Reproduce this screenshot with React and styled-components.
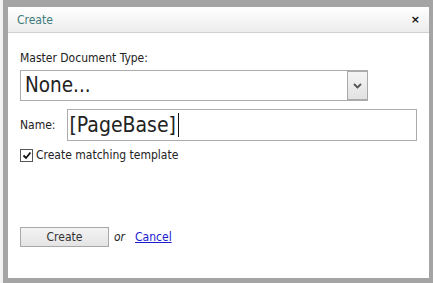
import React from "react";
import styled, { createGlobalStyle } from "styled-components";

const GlobalStyle = createGlobalStyle`
  html, body {
    margin: 0;
    padding: 0;
    background: #f2f2f2;
  }
  body {
    font-family: "DejaVu Sans Condensed", "DejaVu Sans", sans-serif;
    font-size: 12px;
    color: #222;
  }
`;

const Page = styled.div`
  padding-left: 3px;
  height: 283px;
  background: #f2f2f2;
`;

const Frame = styled.div`
  width: 421px;
  height: 271px;
  border-style: solid;
  border-color: #a4a4a4;
  border-width: 7px 4px 5px 5px;
  background: #fff;
  display: flex;
  flex-direction: column;
`;

const Header = styled.div`
  height: 25px;
  border-bottom: 1px solid #cfcfcf;
  background: linear-gradient(#ffffff, #ececec);
  display: flex;
  align-items: center;
  justify-content: space-between;
  padding: 0 9px;
`;

const Title = styled.span`
  color: #3c7b7c;
  font-size: 12px;
`;

const Close = styled.span`
  font-weight: bold;
  font-size: 11px;
  color: #111;
  font-family: "DejaVu Sans", sans-serif;
  cursor: pointer;
`;

const Body = styled.div`
  padding: 18px 12px 0;
  display: flex;
  flex-direction: column;
  flex: 1;
`;

const Label = styled.label`
  font-size: 12px;
  line-height: 14px;
`;

const SelectBox = styled.div`
  margin-top: 5px;
  width: 346px;
  height: 29px;
  border: 1px solid #acacac;
  display: flex;
  align-items: stretch;
`;

const SelectText = styled.div`
  flex: 1;
  font-size: 20.5px;
  line-height: 29px;
  padding-left: 4px;
  color: #222;
`;

const Arrow = styled.div`
  width: 19px;
  border: 1px solid #a9a9a9;
  margin: 0 -1px 0 0;
  background: linear-gradient(#f4f4f4, #e2e2e2);
  display: flex;
  align-items: center;
  justify-content: center;
`;

const NameRow = styled.div`
  margin-top: 8px;
  display: flex;
  align-items: center;
  gap: 11px;
`;

const NameInput = styled.div`
  width: 352px;
  height: 30px;
  border: 1px solid #acacac;
  font-size: 21px;
  line-height: 30px;
  padding-left: 2px;
  box-sizing: content-box;
  display: flex;
  align-items: center;
  color: #222;
`;

const Caret = styled.span`
  display: inline-block;
  width: 1px;
  height: 24px;
  background: #111;
  margin-left: 2px;
`;

const CheckRow = styled.div`
  margin-top: 7px;
  display: flex;
  align-items: center;
  gap: 3px;
`;

const Box = styled.span`
  width: 11px;
  height: 11px;
  border: 1px solid #555;
  background: #fff;
  display: flex;
  align-items: center;
  justify-content: center;
`;

const Actions = styled.div`
  margin-top: 65px;
  display: flex;
  align-items: center;
`;

const Button = styled.button`
  width: 89px;
  height: 20px;
  border: 1px solid #a8a8a8;
  background: linear-gradient(#f3f3f3, #e4e4e4);
  font-family: "DejaVu Sans Condensed", "DejaVu Sans", sans-serif;
  font-size: 12px;
  color: #333;
  padding: 0;
`;

const Or = styled.span`
  font-style: italic;
  margin: 0 10px 0 5px;
`;

const Link = styled.a`
  color: #1a1ad0;
  text-decoration: underline;
`;

export default function App() {
  return (
    <>
      <GlobalStyle />
      <Page>
        <Frame>
          <Header>
            <Title>Create</Title>
            <Close>×</Close>
          </Header>
          <Body>
            <Label>Master Document Type:</Label>
            <SelectBox>
              <SelectText>None...</SelectText>
              <Arrow>
                <svg width="9" height="6" viewBox="0 0 9 6">
                  <path d="M1 1 L4.5 4.5 L8 1" fill="none" stroke="#555" strokeWidth="1.8" />
                </svg>
              </Arrow>
            </SelectBox>
            <NameRow>
              <Label>Name:</Label>
              <NameInput>
                [PageBase]
                <Caret />
              </NameInput>
            </NameRow>
            <CheckRow>
              <Box>
                <svg width="10" height="9" viewBox="0 0 10 9">
                  <path d="M1.5 4.5 L4 7 L8.5 1.5" fill="none" stroke="#111" strokeWidth="1.8" />
                </svg>
              </Box>
              <Label>Create matching template</Label>
            </CheckRow>
            <Actions>
              <Button>Create</Button>
              <Or>or</Or>
              <Link href="#">Cancel</Link>
            </Actions>
          </Body>
        </Frame>
      </Page>
    </>
  );
}
